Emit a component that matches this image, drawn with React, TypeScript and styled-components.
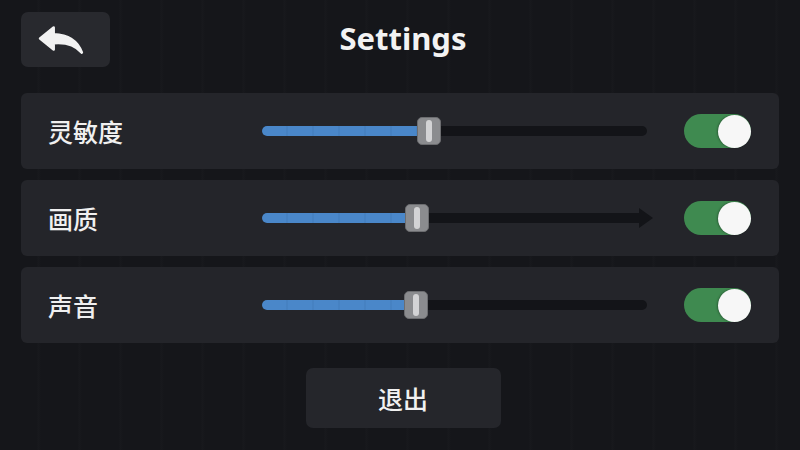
import React, {FC} from 'react';
import styled, {createGlobalStyle} from 'styled-components';

const GlobalStyle = createGlobalStyle`
  html, body {
    margin: 0;
    padding: 0;
    background: #15161a;
  }
  body {
    font-family: "Noto Sans", "Noto Sans CJK SC", sans-serif;
    color: #f1f1f1;
  }
`;

interface Setting {
  label: string;
  value: number;
  arrow?: boolean;
}

const settings: Setting[] = [
  {label: '灵敏度', value: 0.435},
  {label: '画质', value: 0.403, arrow: true},
  {label: '声音', value: 0.4},
];

const BackIcon: FC = () => (
  <svg width="48" height="32" viewBox="0 0 46 30">
    <path
      d="M15 3 L2 13.5 L15 24 L15 18 C26 17 35 19 42 27 C38 16 29 10 15 9.5 Z"
      fill="#f2f2f2"
      stroke="#f2f2f2"
      strokeWidth="2.5"
      strokeLinejoin="round"
    />
  </svg>
);

const Slider: FC<{value: number; arrow?: boolean}> = ({value, arrow}) => (
  <SliderRoot>
    <Track>
      <Fill style={{width: `${value * 100}%`}}/>
      {arrow && <ArrowHead/>}
    </Track>
    <Thumb style={{left: `${value * 100}%`}}><Grip/></Thumb>
  </SliderRoot>
);

const App: FC = () => (
  <Page>
    <GlobalStyle/>
    <Header>
      <BackButton><BackIcon/></BackButton>
      <Title>Settings</Title>
      <Spacer/>
    </Header>
    <List>
      {settings.map(s => (
        <Row key={s.label}>
          <Label>{s.label}</Label>
          <Slider value={s.value} arrow={s.arrow}/>
          <Toggle><Knob/></Toggle>
        </Row>
      ))}
    </List>
    <Footer>
      <ExitButton>退出</ExitButton>
    </Footer>
  </Page>
);

export default App;

const Page = styled.div`
  width: 800px;
  height: 450px;
  box-sizing: border-box;
  padding: 12px 21px 0;
  background: repeating-linear-gradient(90deg, #15161a 0px, #15161a 37px, #18191d 38px, #15161a 41px);
  overflow: hidden;
`;

const Header = styled.div`
  display: grid;
  grid-template-columns: 89px 1fr 89px;
  align-items: center;
  height: 55px;
`;

const BackButton = styled.button`
  display: flex;
  align-items: center;
  justify-content: center;
  width: 89px;
  height: 55px;
  background: #28292e;
  border: none;
  border-radius: 7px;
  padding: 0 8px 0 0;
  cursor: pointer;
`;

const Title = styled.h1`
  margin: 0;
  text-align: center;
  font-size: 31px;
  font-weight: 700;
  color: #f3f3f3;
  padding-left: 6px;
  line-height: 1;
  margin-top: -2px;
`;

const Spacer = styled.div``;

const List = styled.div`
  display: flex;
  flex-direction: column;
  gap: 11px;
  margin-top: 26px;
`;

const Row = styled.div`
  display: flex;
  align-items: center;
  height: 76px;
  box-sizing: border-box;
  padding: 0 28px 0 27px;
  background: #24252a;
  border-radius: 6px;
`;

const Label = styled.div`
  width: 214px;
  font-size: 25px;
  font-weight: 500;
  color: #f0f0f0;
  font-family: "Noto Sans CJK SC", sans-serif;
`;

const SliderRoot = styled.div`
  position: relative;
  width: 385px;
  height: 30px;
  display: flex;
  align-items: center;
`;

const Track = styled.div`
  position: relative;
  width: 100%;
  height: 10px;
  border-radius: 5px;
  background: #131418;
`;

const Fill = styled.div`
  height: 100%;
  border-radius: 5px 0 0 5px;
  background: repeating-linear-gradient(90deg, #4a87c9 0px, #4a87c9 24px, #427cbb 25px, #4a87c9 26px);
`;

const ArrowHead = styled.div`
  position: absolute;
  right: -6px;
  top: -5px;
  width: 0;
  height: 0;
  border-top: 10px solid transparent;
  border-bottom: 10px solid transparent;
  border-left: 14px solid #131418;
`;

const Thumb = styled.div`
  position: absolute;
  top: 1px;
  width: 24px;
  height: 28px;
  margin-left: -12px;
  box-sizing: border-box;
  background: #8b8c8f;
  border: 1px solid #6c6d70;
  border-radius: 5px;
  display: flex;
  justify-content: center;
  align-items: center;
`;

const Grip = styled.div`
  width: 6px;
  height: 22px;
  border-radius: 3px;
  background: #d3d3d5;
`;

const Toggle = styled.div`
  margin-left: auto;
  width: 67px;
  height: 34px;
  border-radius: 17px;
  background: #3f8a50;
  display: flex;
  align-items: center;
  justify-content: flex-end;
`;

const Knob = styled.div`
  width: 33px;
  height: 33px;
  border-radius: 50%;
  background: #f7f7f7;
  box-shadow: -1px 0 2px rgba(0, 0, 0, 0.3);
`;

const Footer = styled.div`
  display: flex;
  justify-content: center;
  margin-top: 25px;
  padding-left: 6px;
`;

const ExitButton = styled.button`
  width: 195px;
  height: 60px;
  background: #25262b;
  border: none;
  border-radius: 7px;
  color: #f1f1f1;
  font-size: 25px;
  font-weight: 500;
  font-family: "Noto Sans CJK SC", sans-serif;
  cursor: pointer;
`;
